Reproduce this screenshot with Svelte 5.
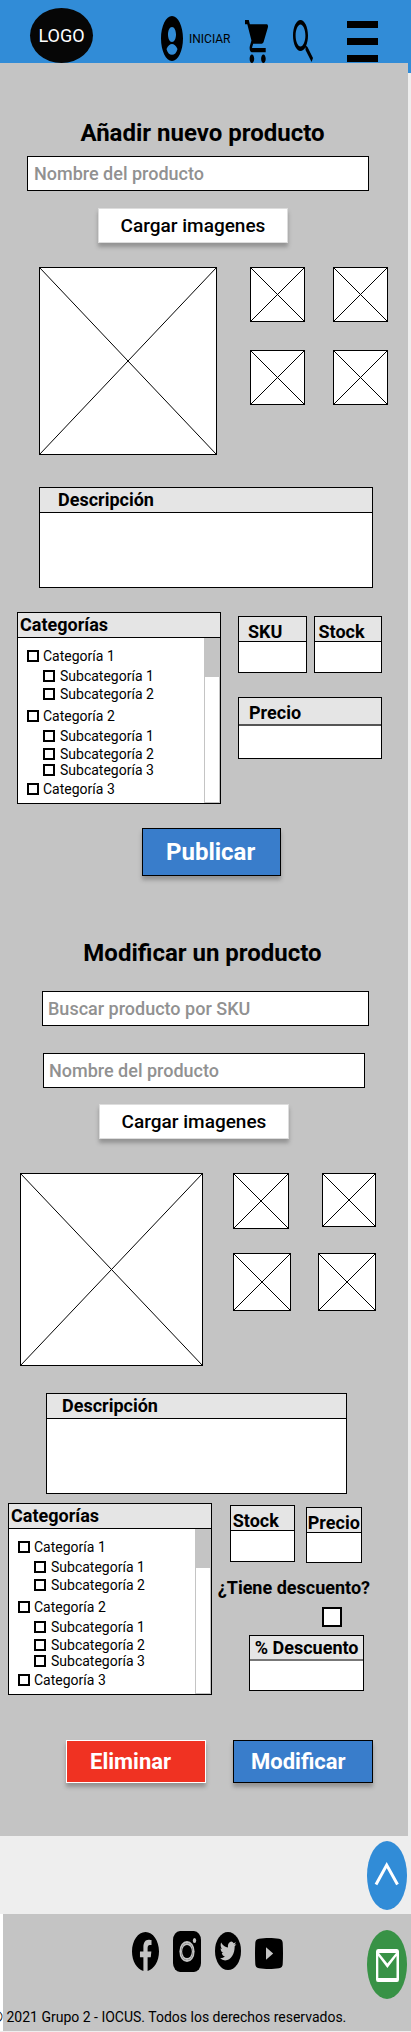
<script>
  const categories = [
    { name: 'Categoría 1', children: ['Subcategoría 1', 'Subcategoría 2'] },
    { name: 'Categoría 2', children: ['Subcategoría 1', 'Subcategoría 2', 'Subcategoría 3'] },
    { name: 'Categoría 3', children: [] }
  ];
</script>

{#snippet placeholder(w, h)}
  <svg class="ph" viewBox="0 0 {w} {h}" style="aspect-ratio: {w} / {h}" aria-hidden="true">
    <rect x="0.5" y="0.5" width={w - 1} height={h - 1} fill="#fff" stroke="#000" />
    <path d="M0.5 0.5L{w - 0.5} {h - 0.5}M{w - 0.5} 0.5L0.5 {h - 0.5}" stroke="#000" fill="none" />
  </svg>
{/snippet}

{#snippet field(name, kind)}
  <label class="field {kind}">
    <span class="head">{name}</span>
    <input type="text" />
  </label>
{/snippet}

{#snippet description()}
  <label class="description">
    <span class="head">Descripción</span>
    <textarea></textarea>
  </label>
{/snippet}

{#snippet categoryPanel()}
  <fieldset class="panel">
    <div class="head">Categorías</div>
    <div class="panel-body">
      <ul class="tree">
        {#each categories as category}
          <li>
            <label><input type="checkbox" />{category.name}</label>
            {#if category.children.length}
              <ul>
                {#each category.children as child}
                  <li><label><input type="checkbox" />{child}</label></li>
                {/each}
              </ul>
            {/if}
          </li>
        {/each}
      </ul>
      <div class="track"><div class="thumb"></div></div>
    </div>
  </fieldset>
{/snippet}

<div class="page">
  <header>
    <a class="logo" href="#inicio">LOGO</a>
    <a class="login" href="#login">
      <svg width="22" height="45" viewBox="0 0 22 45" aria-hidden="true">
        <path fill-rule="evenodd" d="M11 0C17 0 22 10 22 22.500S17 45 11 45 0 35 0 22.500 5 0 11 0zM11 11C8.700 11 7 14.500 7 18.500S8.700 26 11 26s4-3.500 4-7.500S13.300 11 11 11zM5.500 33C7 29.500 9 28 11 28s4 1.500 5.500 5C15.500 37 13.500 38.800 11 38.800S6.500 37 5.500 33z" />
      </svg>
      INICIAR
    </a>
    <a class="cart" href="#carrito" aria-label="Carrito">
      <svg width="23" height="43" viewBox="1 2 20 20" preserveAspectRatio="none" aria-hidden="true">
        <path d="M7 18c-1.100 0-1.990.9-1.990 2S5.900 22 7 22s2-.9 2-2-.9-2-2-2zM1 2v2h2l3.600 7.590-1.350 2.450c-.16.28-.25.61-.25.96 0 1.100.9 2 2 2h12v-2H7.420c-.14 0-.25-.11-.25-.25l.03-.12.9-1.630h7.450c.75 0 1.410-.41 1.750-1.030l3.580-6.490A1 1 0 0 0 20 4H5.210l-.94-2H1zm16 16c-1.100 0-1.990.9-1.990 2s.89 2 1.990 2 2-.9 2-2-.9-2-2-2z" />
      </svg>
    </a>
    <button class="icon search" aria-label="Buscar">
      <svg width="20" height="42" viewBox="0 0 20 42" aria-hidden="true">
        <path fill-rule="evenodd" d="M7.500 0C11.600 0 15 7 15 15.500c0 4-.7 7.500-1.900 10.300L14.500 27 20 38l-1.400 4L12.500 30v-2.800C11 29.700 9.300 31 7.500 31 3.400 31 0 24 0 15.500S3.400 0 7.500 0zm0 4.500C4.900 4.500 2.600 9.500 2.600 15.500s2.300 11 4.900 11 4.900-5 4.900-11-2.300-11-4.900-11z" />
      </svg>
    </button>
    <button class="icon menu" aria-label="Menú">
      <svg width="31" height="41" viewBox="0 0 31 41" aria-hidden="true">
        <path d="M0 0h31v7H0zM0 17h31v7H0zM0 34h31v7H0z" />
      </svg>
    </button>
  </header>

  <main>
    <section class="add">
      <h1>Añadir nuevo producto</h1>
      <input class="text name" type="text" placeholder="Nombre del producto" aria-label="Nombre del producto" />
      <button class="upload">Cargar imagenes</button>

      <div class="gallery">
        {@render placeholder(178, 188)}
        <div class="thumbs">
          {@render placeholder(55, 55)}
          {@render placeholder(55, 55)}
          {@render placeholder(55, 55)}
          {@render placeholder(55, 55)}
        </div>
      </div>

      {@render description()}

      <div class="details">
        {@render categoryPanel()}
        <div class="side">
          <div class="pair">
            {@render field('SKU', 'sku')}
            {@render field('Stock', '')}
          </div>
          {@render field('Precio', 'price')}
        </div>
      </div>

      <button class="action publish">Publicar</button>
    </section>

    <section class="edit">
      <h1>Modificar un producto</h1>
      <input class="text sku-search" type="text" placeholder="Buscar producto por SKU" aria-label="Buscar producto por SKU" />
      <input class="text name" type="text" placeholder="Nombre del producto" aria-label="Nombre del producto" />
      <button class="upload">Cargar imagenes</button>

      <div class="gallery">
        {@render placeholder(183, 193)}
        <div class="thumbs">
          <div class="thumb-row first">
            {@render placeholder(56, 56)}
            {@render placeholder(54, 54)}
          </div>
          <div class="thumb-row">
            {@render placeholder(58, 58)}
            {@render placeholder(58, 58)}
          </div>
        </div>
      </div>

      {@render description()}

      <div class="details">
        {@render categoryPanel()}
        <div class="side">
          <div class="pair">
            {@render field('Stock', 'stock')}
            {@render field('Precio', 'cost')}
          </div>
          <label class="question">
            ¿Tiene descuento?
            <input type="checkbox" />
          </label>
          {@render field('% Descuento', 'discount')}
        </div>
      </div>

      <div class="actions">
        <button class="action delete">Eliminar</button>
        <button class="action modify">Modificar</button>
      </div>
    </section>
  </main>

  <footer>
    <nav aria-label="Redes sociales">
      <a href="#facebook" aria-label="Facebook">
        <svg width="27" height="39" viewBox="0 0 24 24" preserveAspectRatio="none" aria-hidden="true">
          <path d="M24 12.073c0-6.627-5.373-12-12-12s-12 5.373-12 12c0 5.990 4.388 10.954 10.125 11.854v-8.385H7.078v-3.470h3.047V9.430c0-3.007 1.792-4.669 4.533-4.669 1.312 0 2.686.235 2.686.235v2.953H15.830c-1.491 0-1.956.925-1.956 1.874v2.250h3.328l-.532 3.470h-2.796v8.385C19.612 23.027 24 18.062 24 12.073z" />
        </svg>
      </a>
      <a href="#instagram" aria-label="Instagram">
        <svg width="28" height="41" viewBox="0 0 28 41" aria-hidden="true">
          <rect width="28" height="41" rx="7" ry="9" />
          <ellipse cx="14" cy="20.500" rx="7.600" ry="10.500" fill="#c4c4c4" />
          <ellipse cx="14" cy="20.500" rx="6" ry="8.600" />
          <ellipse cx="14" cy="20.500" rx="6" ry="8.600" fill="#c4c4c4" />
          <ellipse cx="14" cy="20.500" rx="4.800" ry="6.600" />
          <ellipse cx="21.500" cy="9.500" rx="1.700" ry="2.500" fill="#c4c4c4" />
        </svg>
      </a>
      <a href="#twitter" aria-label="Twitter">
        <svg width="26" height="38" viewBox="0 0 26 38" aria-hidden="true">
          <ellipse cx="13" cy="19" rx="13" ry="19" />
          <path transform="translate(5 7.500) scale(0.68 0.96)" fill="#c4c4c4" d="M23.953 4.570a10 10 0 01-2.825.775 4.958 4.958 0 002.163-2.723c-.951.555-2.005.959-3.127 1.184a4.920 4.920 0 00-8.384 4.482C7.690 8.095 4.067 6.130 1.640 3.162a4.822 4.822 0 00-.666 2.475c0 1.710.87 3.213 2.188 4.096a4.904 4.904 0 01-2.228-.616v.06a4.923 4.923 0 003.946 4.827 4.996 4.996 0 01-2.212.085 4.936 4.936 0 004.604 3.417 9.867 9.867 0 01-6.102 2.105c-.39 0-.779-.023-1.170-.067a13.995 13.995 0 007.557 2.209c9.053 0 13.998-7.496 13.998-13.985 0-.21 0-.42-.015-.63A9.935 9.935 0 0024 4.590z" />
        </svg>
      </a>
      <a href="#youtube" aria-label="YouTube">
        <svg width="28" height="31" viewBox="0 0 28 31" aria-hidden="true">
          <path fill-rule="evenodd" d="M4 .8C10 -.2 18 -.2 24 .8c2.500.5 3.500 1.500 3.700 4 .4 7 .4 14.400 0 21.400-.2 2.500-1.200 3.500-3.700 4-6 1-14 1-20 0C1.500 29.700.500 28.700.300 26.200c-.4-7-.4-14.400 0-21.400C.500 2.300 1.500 1.300 4 .8zM11 9.200v12.600L18.200 15.500z" />
        </svg>
      </a>
    </nav>
    <p>© 2021 Grupo 2 - IOCUS. Todos los derechos reservados.</p>
  </footer>

  <div class="floating">
    <a class="up" href="#inicio" aria-label="Subir">
      <svg width="40" height="69" viewBox="0 0 40 69" aria-hidden="true">
        <path d="M9 43.500L19.700 24 30.500 43.500" fill="none" stroke="#fff" stroke-width="3" />
      </svg>
    </a>
    <a class="mail" href="#contacto" aria-label="Contacto">
      <svg width="40" height="69" viewBox="0 0 40 69" aria-hidden="true">
        <path fill="#fff" fill-rule="evenodd" d="M11 19h19q2 0 2 2.500v28q0 2.500-2 2.500H11q-2 0-2-2.500v-28Q9 19 11 19zM11.300 26v22h18.200V26L20.400 38zM12 23l8.400 10.500L29 23z" />
      </svg>
    </a>
  </div>
</div>

<style>
  :global(body) {
    margin: 0;
    background: #eee;
  }

  .page {
    position: relative;
    overflow: hidden;
    font-family: Roboto, sans-serif;
    font-size: 14px;
    color: #000;
    padding-bottom: 1px;
  }

  .page :global(*) {
    box-sizing: border-box;
  }

  button,
  input,
  textarea {
    font-family: inherit;
    margin: 0;
  }

  a {
    color: inherit;
    text-decoration: none;
  }

  svg {
    display: block;
    flex: none;
  }

  header {
    display: flex;
    align-items: flex-start;
    height: 73px;
    padding: 0 33px 0 30px;
    background: #318cd7;
  }

  .logo {
    width: 63px;
    height: 55px;
    margin-top: 8px;
    border-radius: 50%;
    background: #060606;
    color: #fff;
    font-size: 18px;
    line-height: 55px;
    text-align: center;
  }

  .login {
    display: flex;
    align-items: center;
    gap: 6px;
    margin: 16px 0 0 68px;
    font-size: 12px;
  }

  .cart {
    margin: 20px 0 0 auto;
  }

  .icon {
    padding: 0;
    border: 0;
    background: none;
  }

  .search {
    margin: 20px 0 0 25px;
  }

  .menu {
    margin: 21px 0 0 34px;
  }

  main {
    position: relative;
    margin: -10px 3px 0 0;
    padding: 54px 0 53px;
    background: #c4c4c4;
  }

  section {
    display: flex;
    flex-direction: column;
  }

  .edit {
    margin-top: 61px;
  }

  h1 {
    margin: 0;
    padding-right: 3px;
    font-size: 24px;
    line-height: 32px;
    font-weight: 700;
    text-align: center;
  }

  .text {
    height: 35px;
    padding: 0 6px;
    border: 1px solid #000;
    border-radius: 0;
    background: #fff;
    font-size: 18px;
    font-weight: 500;
  }

  .text::placeholder {
    color: #919191;
    opacity: 1;
  }

  .add .name {
    margin: 7px 39px 0 27px;
  }

  .sku-search {
    margin: 22px 39px 0 42px;
  }

  .edit .text {
    padding: 0 5px;
  }

  .edit .name {
    margin: 27px 43px 0;
  }

  .upload {
    align-self: center;
    width: 190px;
    height: 35px;
    margin: 17px 22px 0 0;
    padding: 0;
    border: 1px solid #ddd;
    background: #fff;
    box-shadow: 0 4px 4px rgba(0, 0, 0, 0.25);
    color: #000;
    font-size: 19px;
    font-weight: 500;
  }

  .edit .upload {
    margin: 16px 20px 0 0;
  }

  .gallery {
    display: grid;
    align-items: start;
  }

  .ph {
    width: 100%;
    overflow: visible;
  }

  .add .gallery {
    grid-template-columns: 178fr 138fr;
    gap: 33px;
    margin: 24px 20px 0 39px;
  }

  .add .thumbs {
    display: grid;
    grid-template-columns: 1fr 1fr;
    gap: 28px;
  }

  .edit .gallery {
    grid-template-columns: 183fr 143fr;
    gap: 30px;
    margin: 34px 32px 0 20px;
  }

  .edit .thumbs {
    display: grid;
    gap: 24px;
  }

  .thumb-row {
    display: grid;
    grid-template-columns: 58fr 58fr;
    gap: 27px;
    align-items: start;
  }

  .thumb-row.first {
    grid-template-columns: 56fr 54fr;
    gap: 33px;
  }

  .head {
    display: block;
    height: 25px;
    border-bottom: 1px solid #000;
    background: #e5e5e5;
    font-size: 18px;
    line-height: 24px;
    font-weight: 700;
    white-space: nowrap;
  }

  .description {
    display: block;
    height: 101px;
    margin: 32px 35px 0 39px;
    border: 1px solid #000;
    background: #fff;
  }

  .edit .description {
    margin: 27px 61px 0 46px;
  }

  .description .head {
    padding-left: 18px;
  }

  .edit .description .head {
    padding-left: 15px;
  }

  textarea {
    display: block;
    width: 100%;
    height: 73px;
    border: 0;
    background: none;
    resize: none;
  }

  .details {
    display: grid;
    align-items: start;
  }

  .add .details {
    grid-template-columns: 204fr 144fr;
    gap: 17px;
    margin: 24px 26px 0 17px;
  }

  .edit .details {
    grid-template-columns: 204fr 152fr;
    gap: 6px;
    margin: 9px 38px 0 8px;
  }

  .panel {
    min-width: 0;
    margin: 0;
    padding: 0;
    border: 1px solid #000;
    background: #fff;
  }

  .panel .head {
    padding-left: 2px;
  }

  .panel-body {
    display: flex;
    justify-content: space-between;
  }

  ul {
    margin: 0;
    padding: 0;
    list-style: none;
  }

  .tree {
    padding: 10px 0 6px 9px;
  }

  .tree label {
    display: flex;
    align-items: center;
    gap: 4px;
    height: 16px;
    line-height: 16px;
  }

  .tree > li + li {
    margin-top: 6px;
  }

  .tree > li:last-child {
    margin-top: 3px;
  }

  .tree ul {
    padding: 4px 0 0 16px;
  }

  .tree ul label {
    gap: 5px;
  }

  .tree ul li:nth-child(2) {
    margin-top: 2px;
  }

  input[type='checkbox'] {
    appearance: none;
    width: 12px;
    height: 12px;
    border: 2px solid #000;
    border-radius: 0;
    background: #fff;
  }

  .track {
    width: 16px;
    border: 1px solid #c4c4c4;
    border-top: 0;
  }

  .thumb {
    height: 39px;
    background: #c4c4c4;
  }

  .side {
    display: flex;
    flex-direction: column;
  }

  .pair {
    display: flex;
    align-items: flex-start;
  }

  .add .pair {
    gap: 7px;
    margin: 4px 0 24px;
  }

  .edit .pair {
    gap: 11px;
    margin: 2px 8px 13px 12px;
  }

  .field {
    display: block;
    flex: 1;
    height: 57px;
    min-width: 0;
    border: 1px solid #000;
    background: #fff;
  }

  .field .head {
    padding: 5px 0 0 4px;
    line-height: 19px;
  }

  .field input {
    display: block;
    width: 100%;
    height: 29px;
    border: 0;
    background: none;
  }

  .field.sku .head {
    padding-left: 9px;
  }

  .field.price {
    flex: none;
    height: 62px;
  }

  .field.price .head {
    height: 28px;
    padding-left: 10px;
    border-bottom: 2px solid #555;
  }

  .field.stock {
    flex: 65;
  }

  .field.stock .head {
    padding-left: 2px;
  }

  .field.cost {
    flex: 56;
    height: 56px;
    margin-top: 2px;
  }

  .field.cost .head {
    padding-left: 1px;
  }

  .field.discount {
    flex: none;
    height: 56px;
    margin: 8px 6px 0 31px;
  }

  .field.discount .head {
    padding: 0 0 0 5px;
    border-bottom: 2px solid #777;
    line-height: 24px;
  }

  .question {
    font-size: 18px;
    line-height: 24px;
    font-weight: 700;
    white-space: nowrap;
  }

  .question input[type='checkbox'] {
    display: block;
    width: 20px;
    height: 20px;
    margin: 7px 0 0 104px;
  }

  .action {
    padding: 0 0 0 23px;
    border: 1px solid #000;
    background: #397dcb;
    box-shadow: 0 4px 4px rgba(0, 0, 0, 0.25);
    color: #fff;
    font-size: 22px;
    font-weight: 700;
    text-align: left;
  }

  .publish {
    align-self: center;
    width: 139px;
    height: 48px;
    margin: 24px 0 0 15px;
    font-size: 24px;
  }

  .actions {
    display: grid;
    grid-template-columns: 1fr 1fr;
    gap: 27px;
    margin: 45px 35px 0 66px;
  }

  .actions .action {
    height: 43px;
  }

  .actions .delete {
    border-color: #fff;
    background: #f03222;
  }

  .actions .modify {
    padding-left: 17px;
  }

  footer {
    margin-top: 78px;
    padding-top: 16px;
    border-left: 3px solid #fff;
    background: #c4c4c4;
  }

  nav {
    display: flex;
    justify-content: center;
    align-items: center;
    gap: 14px;
    height: 42px;
    padding-left: 1px;
  }

  nav a:last-child {
    margin-top: 5px;
  }

  footer p {
    margin: 0 0 0 -11px;
    padding: 37px 0 6px;
    line-height: 16px;
    white-space: nowrap;
  }

  .floating {
    position: absolute;
    right: 4px;
    bottom: 33px;
    display: flex;
    flex-direction: column;
    gap: 20px;
  }

  .floating a {
    border-radius: 50%;
    background: #318cd7;
  }

  .floating .mail {
    background: #389246;
  }
</style>
